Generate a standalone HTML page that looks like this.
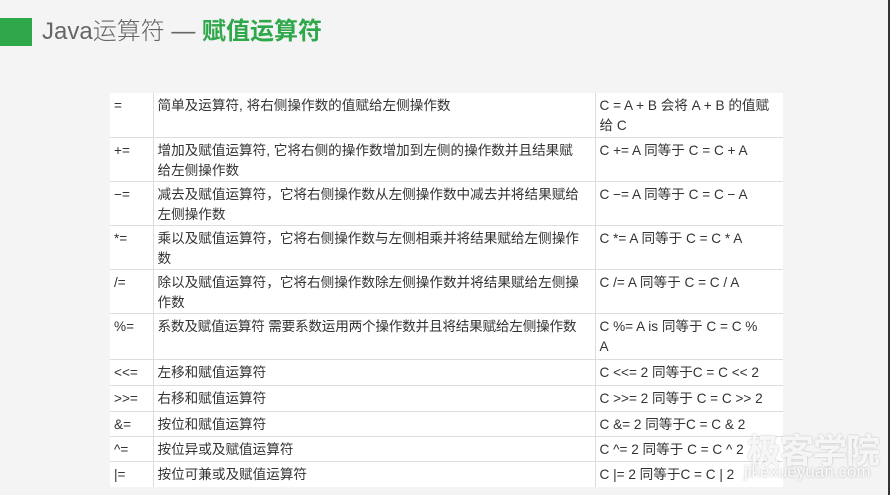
<!DOCTYPE html>
<html><head><meta charset="utf-8"><style>
body{margin:0;width:890px;height:495px;background:#f4f4f4;position:relative;overflow:hidden;font-family:"Liberation Sans","Noto Sans CJK SC",sans-serif;}
.sq{position:absolute;left:0;top:18px;width:32px;height:28px;background:#2ea84a;}
.title{position:absolute;left:42px;top:16px;font-size:24px;line-height:32px;color:#666;font-weight:300;white-space:nowrap;}
.title b{color:#2ea84a;font-weight:bold;}
.edge{position:absolute;right:0;top:0;width:2px;height:495px;background:#333;}
table{position:absolute;left:110px;top:93px;width:673px;border-collapse:collapse;background:#fff;font-size:13.6px;color:#333;table-layout:fixed;}
td{border-top:1px solid #ddd;vertical-align:top;padding:3px 4px 0 4px;line-height:20px;box-sizing:border-box;overflow:hidden;}
td:first-child{width:43px;}
td:nth-child(2){width:442px;border-left:1px solid #ddd;border-right:1px solid #ddd;padding-right:12px;}
td:nth-child(3){padding-right:6px;}
tr:first-child td{border-top:none;}
.wm{position:absolute;left:747px;top:424px;color:rgba(255,255,255,.85);font-size:34px;font-weight:bold;letter-spacing:-1px;text-shadow:0 0 2px rgba(0,0,0,.25);}
.wm2{position:absolute;left:744px;top:462px;color:rgba(255,255,255,.9);font-size:17px;text-shadow:0 0 2px rgba(0,0,0,.3);}
</style></head><body>
<div class="sq"></div>
<div class="title">Java运算符 — <b>赋值运算符</b></div>
<table>
<tr style="height:44px"><td>=</td><td>简单及运算符, 将右侧操作数的值赋给左侧操作数</td><td>C = A + B 会将 A + B 的值赋给 C</td></tr>
<tr style="height:43px"><td>+=</td><td>增加及赋值运算符, 它将右侧的操作数增加到左侧的操作数并且结果赋给左侧操作数</td><td>C += A 同等于 C = C + A</td></tr>
<tr style="height:44px"><td>−=</td><td>减去及赋值运算符，它将右侧操作数从左侧操作数中减去并将结果赋给左侧操作数</td><td>C −= A 同等于 C = C − A</td></tr>
<tr style="height:43px"><td>*=</td><td>乘以及赋值运算符，它将右侧操作数与左侧相乘并将结果赋给左侧操作数</td><td>C *= A 同等于 C = C * A</td></tr>
<tr style="height:44px"><td>/=</td><td>除以及赋值运算符，它将右侧操作数除左侧操作数并将结果赋给左侧操作数</td><td>C /= A 同等于 C = C / A</td></tr>
<tr style="height:46px"><td>%=</td><td style="letter-spacing:-0.2px">系数及赋值运算符 需要系数运用两个操作数并且将结果赋给左侧操作数</td><td>C %= A is 同等于 C = C %<br>A</td></tr>
<tr style="height:26px"><td>&lt;&lt;=</td><td>左移和赋值运算符</td><td>C &lt;&lt;= 2 同等于C = C &lt;&lt; 2</td></tr>
<tr style="height:26px"><td>&gt;&gt;=</td><td>右移和赋值运算符</td><td>C &gt;&gt;= 2 同等于 C = C &gt;&gt; 2</td></tr>
<tr style="height:25px"><td>&amp;=</td><td>按位和赋值运算符</td><td>C &amp;= 2 同等于C = C &amp; 2</td></tr>
<tr style="height:25px"><td>^=</td><td>按位异或及赋值运算符</td><td>C ^= 2 同等于 C = C ^ 2</td></tr>
<tr style="height:26px"><td>|=</td><td>按位可兼或及赋值运算符</td><td>C |= 2 同等于C = C | 2</td></tr>
</table>
<div class="wm">极客学院</div>
<div class="wm2">jikexueyuan.com</div>
<div class="edge"></div>
</body></html>
